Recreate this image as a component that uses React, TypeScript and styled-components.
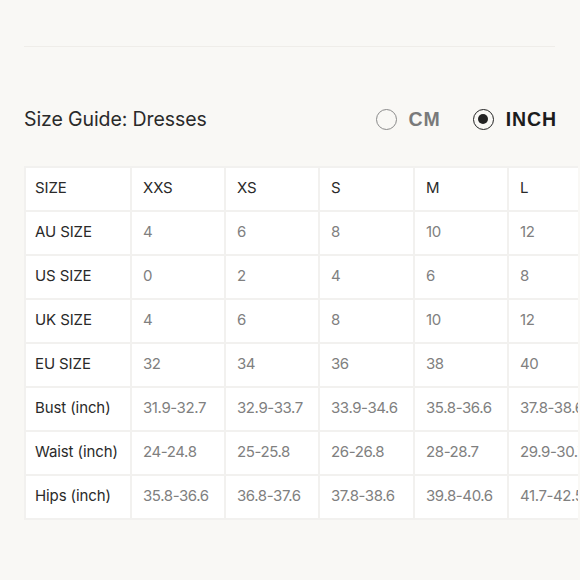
import React from "react";
import styled, { createGlobalStyle } from "styled-components";

const Global = createGlobalStyle`
  html, body { margin: 0; padding: 0; background: #f9f8f5; }
  body { font-family: Inter, "Noto Sans", sans-serif; }
`;

const Page = styled.div`
  width: 578px;
  height: 580px;
  padding: 46px 0 0 24px;
  box-sizing: border-box;
  overflow: hidden;
`;

const Divider = styled.div`
  width: 531px;
  height: 1px;
  background: #efede9;
`;

const Header = styled.div`
  display: flex;
  align-items: center;
  justify-content: space-between;
  width: 533px;
  margin-top: 60px;
  height: 24px;
`;

const Title = styled.h1`
  margin: 0;
  font-size: 19.5px;
  font-weight: 400;
  color: #2a2a2a;
  letter-spacing: -0.1px;
`;

const Units = styled.div`
  display: flex;
  align-items: center;
  gap: 32px;
`;

const Unit = styled.label<{ $active?: boolean }>`
  display: flex;
  align-items: center;
  gap: 12px;
  font-family: "Liberation Sans", Arial, sans-serif;
  font-weight: 700;
  font-size: 19.5px;
  letter-spacing: 0.9px;
  color: ${(p) => (p.$active ? "#1c1c1c" : "#7a7a7a")};
`;

const Radio = styled.span<{ $active?: boolean }>`
  width: 21px;
  height: 21px;
  border-radius: 50%;
  box-sizing: border-box;
  border: 1.5px solid ${(p) => (p.$active ? "#222" : "#8a8a8a")};
  display: flex;
  align-items: center;
  justify-content: center;
  &::after {
    content: "";
    width: 10px;
    height: 10px;
    border-radius: 50%;
    background: ${(p) => (p.$active ? "#222" : "transparent")};
  }
`;

const TableWrap = styled.div`
  margin-top: 35px;
  overflow: hidden;
`;

const Table = styled.table`
  border-collapse: collapse;
  table-layout: fixed;
  width: 578px;
  background: #fff;
`;

const Cell = styled.td<{ $label?: boolean; $head?: boolean }>`
  height: 39px;
  padding: 0 0 3px ${(p) => (p.$label ? "9px" : "11px")};
  border: 2px solid #f2f1ef;
  font-size: 15px;
  font-weight: 400;
  white-space: nowrap;
  overflow: hidden;
  color: ${(p) => (p.$label || p.$head ? "#2a2a2a" : "#808080")};
  letter-spacing: ${(p) => (p.$label || p.$head ? "-0.1px" : "-0.4px")};
  text-align: left;
`;

const widths = [106, 94, 94, 95, 94, 95];

const rows: string[][] = [
  ["SIZE", "XXS", "XS", "S", "M", "L"],
  ["AU SIZE", "4", "6", "8", "10", "12"],
  ["US SIZE", "0", "2", "4", "6", "8"],
  ["UK SIZE", "4", "6", "8", "10", "12"],
  ["EU SIZE", "32", "34", "36", "38", "40"],
  ["Bust (inch)", "31.9-32.7", "32.9-33.7", "33.9-34.6", "35.8-36.6", "37.8-38.6"],
  ["Waist (inch)", "24-24.8", "25-25.8", "26-26.8", "28-28.7", "29.9-30.7"],
  ["Hips (inch)", "35.8-36.6", "36.8-37.6", "37.8-38.6", "39.8-40.6", "41.7-42.5"],
];

export default function App() {
  return (
    <>
      <Global />
      <Page>
        <Divider />
        <Header>
          <Title>Size Guide: Dresses</Title>
          <Units>
            <Unit>
              <Radio />
              CM
            </Unit>
            <Unit $active>
              <Radio $active />
              INCH
            </Unit>
          </Units>
        </Header>
        <TableWrap>
          <Table>
            <colgroup>
              {widths.map((w, i) => (
                <col key={i} style={{ width: w }} />
              ))}
            </colgroup>
            <tbody>
              {rows.map((r, ri) => (
                <tr key={ri}>
                  {r.map((c, ci) => (
                    <Cell key={ci} $label={ci === 0} $head={ri === 0}>
                      {c}
                    </Cell>
                  ))}
                </tr>
              ))}
            </tbody>
          </Table>
        </TableWrap>
      </Page>
    </>
  );
}
